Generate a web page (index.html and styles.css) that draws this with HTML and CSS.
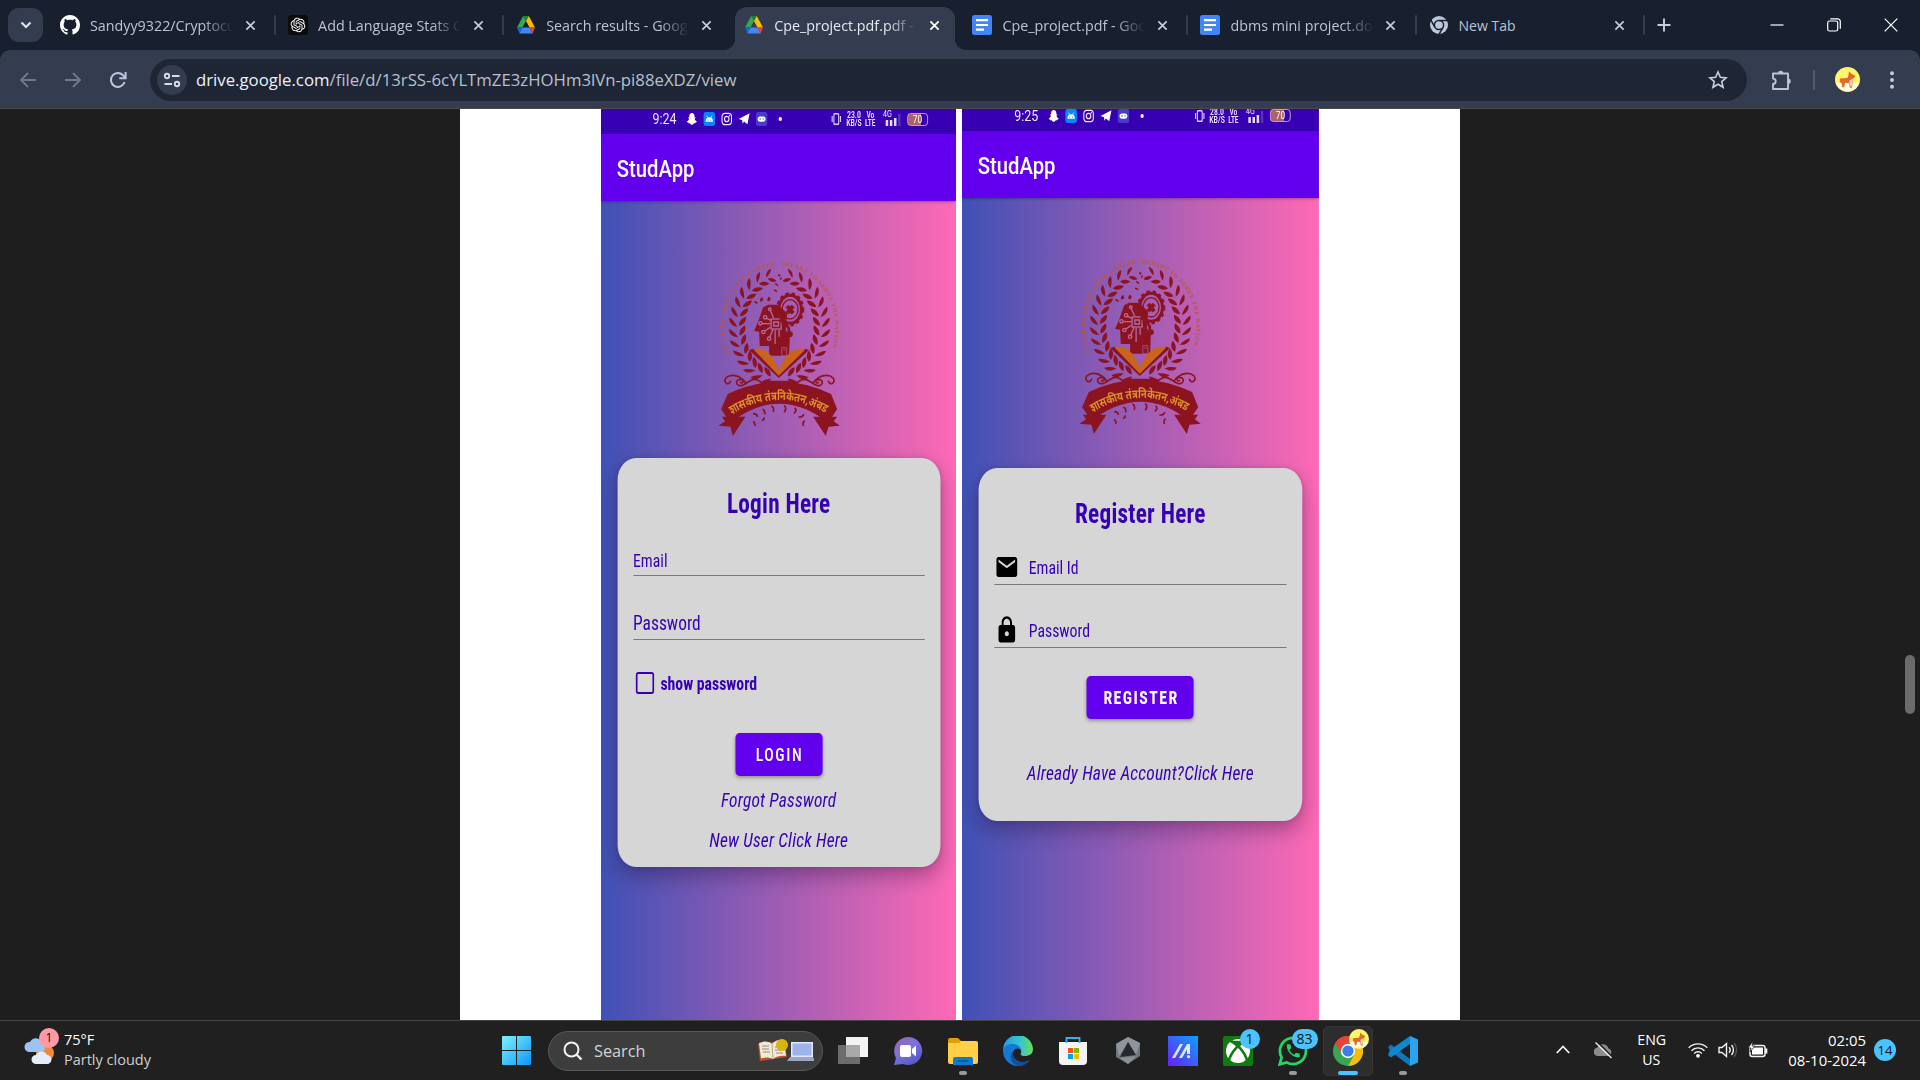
FILE: index.html
```
<!DOCTYPE html>
<html lang="en">
<head>
<meta charset="utf-8">
<title>Cpe_project.pdf.pdf - Google Drive</title>
<link rel="stylesheet" href="styles.css">
</head>
<body>
<svg class="defs" aria-hidden="true">
  <defs>
    <symbol id="i-close" viewBox="0 0 12 12"><path d="M1.5 1.5l9 9M10.500 1.500l-9 9" fill="none" stroke="currentColor" stroke-width="1.9"/></symbol>
    <symbol id="i-drive" viewBox="0 0 20 20">
      <path d="M7.200 1h5.600L10 6z" fill="#188038"/><path d="M7.200 1L10 6 6.400 12.500H1z" fill="#34a853"/>
      <path d="M12.800 1L10 6l3.600 6.500H19z" fill="#fbbc04"/>
      <path d="M1 12.500h5.400L3.500 18.500z" fill="#1967d2"/><path d="M6.400 12.500h7.200l2.900 6h-13z" fill="#4285f4"/><path d="M13.600 12.500H19l-2.500 6z" fill="#ea4335"/>
    </symbol>
    <symbol id="i-docs" viewBox="0 0 20 20"><rect width="20" height="20" rx="2.500" fill="#4285f4"/><path d="M4 5.200h12M4 10h12M4 14.600h8" stroke="#fff" stroke-width="2.200"/></symbol>
    <symbol id="i-corgi" viewBox="0 0 26 26"><circle cx="13" cy="13" r="13" fill="#fdf56c"/><path d="M.8 16.500h24.400A13 13 0 0 1 .8 16.500z" fill="#fffde0"/><path d="M5 12l8-.5 1-3 .5-4 2.500 2.500 3 1.500 1 1.500-2 2-.5 3.500-1 6h-2l-1-4.500-4-.5-1 4.500H7.500L7 17l-2-1.500z" fill="#e06a2b"/><path d="M15 14l3.500-2-.5 7-2 1.500-1-3.500z" fill="#f4cfae"/></symbol>
    <symbol id="i-snap" viewBox="0 0 16 16"><path d="M8 1c2.300 0 3.600 1.600 3.600 3.700v1.500l1.200-.3.300.8-1.300 1c.6 1.600 1.700 2.700 3.200 3.200-.2.900-1.300 1-2 1.200-.2.500-.1.900-.6.900-.8 0-1.400-.2-2.100.3C9.500 13.900 9 14.500 8 14.500s-1.500-.6-2.300-1.200c-.7-.5-1.300-.3-2.100-.3-.5 0-.4-.4-.6-.9-.7-.2-1.800-.3-2-1.200 1.500-.5 2.600-1.600 3.200-3.200l-1.300-1 .3-.8 1.200.3V4.700C4.400 2.600 5.700 1 8 1z" fill="#fff"/></symbol>
    <symbol id="i-android" viewBox="0 0 16 16"><rect width="16" height="16" rx="3.500" fill="#0a84ff"/><path d="M3 11a5 5 0 0 1 10 0z" fill="#fff"/><path d="M4.500 4.200l1.400 2.400M11.500 4.200l-1.400 2.400" stroke="#fff"/><circle cx="6" cy="9.300" r=".7" fill="#0a84ff"/><circle cx="10" cy="9.300" r=".7" fill="#0a84ff"/></symbol>
    <symbol id="i-insta" viewBox="0 0 16 16"><g fill="none" stroke="#f3e6ff" stroke-width="1.500"><rect x="1.500" y="1.500" width="13" height="13" rx="3.800"/><circle cx="8" cy="8" r="3.100"/></g><circle cx="11.700" cy="4.300" r=".9" fill="#fff"/></symbol>
    <symbol id="i-telegram" viewBox="0 0 16 16"><path d="M.5 8L15.500 1.500 12.500 14 7.800 10.800 5.800 13.500 5.300 9.300z" fill="#fff"/></symbol>
    <symbol id="i-game" viewBox="0 0 16 16"><rect width="16" height="16" rx="3.500" fill="#4a3ccb"/><rect x="2.500" y="5" width="11" height="6" rx="3" fill="#fff"/><path d="M5 8h2M9.500 8h1.500" stroke="#4a3ccb" stroke-width="1.300"/></symbol>
    <symbol id="i-vibrate" viewBox="0 0 16 16"><g fill="none" stroke="#ddd0f5" stroke-width="1.500"><rect x="4.700" y="2" width="6.600" height="12" rx="1"/><path d="M2.300 4.500v7M13.700 4.500v7"/></g></symbol>

    <symbol id="emblem" viewBox="0 0 480 585">
      <path id="ring" d="M89 312A166 187 0 1 1 391 312" fill="none"/>
      <text class="motto"><textPath href="#ring" textLength="692" lengthAdjust="spacing">ENTER TO SHAPE YOUR CAREER, DEPART TO SERVE THE NATION</textPath></text>
      <g fill="#8c1420">
        <g id="branch">
          <path transform="translate(208 82) rotate(72) scale(.8)" d="M-2 10C-9-2-15-11-27-17-29-4-19 8-2 10zM3 6C2-6 9-17 22-22 25-8 16 3 3 6z"/>
          <path transform="translate(181 95) rotate(57) scale(.9)" d="M-2 10C-9-2-15-11-27-17-29-4-19 8-2 10zM3 6C2-6 9-17 22-22 25-8 16 3 3 6z"/>
          <g transform="translate(158 115) rotate(43)"><path id="sprig" d="M-2 10C-9-2-15-11-27-17-29-4-19 8-2 10zM3 6C2-6 9-17 22-22 25-8 16 3 3 6z"/></g>
          <use href="#sprig" transform="translate(140 139) rotate(31)"/>
          <use href="#sprig" transform="translate(128 164) rotate(21)"/>
          <use href="#sprig" transform="translate(119 192) rotate(12)"/>
          <use href="#sprig" transform="translate(115 221) rotate(3)"/>
          <use href="#sprig" transform="translate(116 251) rotate(-6)"/>
          <use href="#sprig" transform="translate(121 280) rotate(-15)"/>
          <use href="#sprig" transform="translate(131 307) rotate(-24)"/>
          <use href="#sprig" transform="translate(144 332) rotate(-34)"/>
          <use href="#sprig" transform="translate(161 352) rotate(-45)"/>
          <use href="#sprig" transform="translate(181 369) rotate(-57)"/>
          <use href="#sprig" transform="translate(206 380) rotate(-69)"/>
        </g>
        <use href="#branch" transform="translate(478 0) scale(-1 1)"/>
        <!-- head in profile -->
        <path d="M190 172L205 164 235 164 262 190 258 240 270 262 268 317H208V288H180L178 245 163 243 176 212z"/>
        <path d="M228 98l8 8-2 3-9-7zM240 90l3-9 4 2-4 8zM224 118l9 5-2 4-9-5zM236 72l7 3-3 5-6-3zM165 152l10 6-4 4-8-5zM180 148l7-8 4 10-9 6zM205 140l8 4-3 10-8-2z"/>
      </g>
      <g fill="none" stroke="#b46aa0" stroke-width="4">
        <rect x="214" y="207" width="30" height="30"/><path d="M222 216h14v12h-14z"/>
        <circle cx="196" cy="202" r="5"/><circle cx="182" cy="220" r="5"/><circle cx="191" cy="246" r="5"/><circle cx="208" cy="266" r="5"/><circle cx="210" cy="178" r="4"/>
        <path d="M201 205l12 6M187 221h26M195 243l16-11M210 261l10-24M226 240v42M212 183l10 22M238 240v20"/>
      </g>
      <path d="M246 293h15v24h-15zM250 300h8" fill="#8c1420" stroke="#b46aa0" stroke-width="2"/>
      <path d="M245 222h14l8 14v20M268 250l8 5" fill="none" stroke="#8c1420" stroke-width="8"/><circle cx="270" cy="253" r="9" fill="#8c1420"/>
      <!-- gear -->
      <g fill="none" stroke="#8c1420">
        <ellipse cx="271" cy="178" rx="39" ry="48" stroke-width="7" stroke-dasharray="10 9"/>
        <ellipse cx="271" cy="178" rx="34" ry="42" stroke-width="9"/>
        <ellipse cx="271" cy="178" rx="24" ry="29" stroke-width="4"/>
        <path d="M262 168l18 22M280 168l-18 22" stroke-width="12"/>
      </g>
      <!-- open book -->
      <path d="M148 300L237 384 328 300 316 296 237 368 160 296z" fill="#8c1420"/>
      <path d="M162 299C185 288 208 304 223 330 232 346 235 352 237 362 240 352 243 346 252 330 268 304 292 290 316 299L237 377z" fill="#c8641e"/>
      <!-- scroll work -->
      <g id="curl" fill="none" stroke="#8c1420" stroke-width="5" stroke-linecap="round">
        <path d="M190 402C160 372 150 398 128 406 108 412 104 388 122 388 136 390 128 402 122 398M138 398C118 372 90 372 78 384 68 398 88 408 92 394"/>
      </g>
      <use href="#curl" transform="translate(478 0) scale(-1 1)"/>
      <!-- ribbon -->
      <g fill="#8c1420">
        <path d="M66 500L137 500 99 558 92 530 56 527 76 514zM412 500L340 500 378 558 386 530 420 527 402 514z"/>
        <path d="M196 392H282L278 410H200z"/>
        <path d="M84 432Q240 358 394 432L412 478 385 518Q240 404 92 518L64 478z"/>
        <g fill="none" stroke="#8c1420" stroke-width="5"><path d="M160 514q7 5 5 14M160 491q12 0 13 10M188 477q10 6 6 16M186 511q8-1 7-9M215 468q10 6 5 18M253 466q10 8 0 21M284 474q10 6-2 16M312 492q-2 10-16 9M315 512q-8 4-4 16"/></g>
      </g>
      <path id="band" d="M94 494Q240 406 386 494" fill="none"/>
      <text class="ribbon-text" lang="mr"><textPath href="#band" startOffset="2" textLength="296" lengthAdjust="spacingAndGlyphs">शासकीय तंत्रनिकेतन,अंबड</textPath></text>
    </symbol>
  </defs>
</svg>

<div class="window">
  <header class="tabstrip">
    <div class="tab-search"><svg width="14" height="14" viewBox="0 0 14 14"><path d="M2.500 4.500L7 9l4.500-4.500" fill="none" stroke="#dfe3ee" stroke-width="2.200"/></svg></div>
    <div class="tabs">
      <div class="tab divided">
        <svg class="fav" viewBox="0 0 16 16"><path fill="#fff" d="M8 0C3.580 0 0 3.580 0 8c0 3.540 2.290 6.530 5.470 7.590.4.070.55-.17.55-.38 0-.19-.01-.82-.01-1.490-2.010.37-2.530-.49-2.690-.94-.09-.23-.48-.94-.82-1.130-.28-.15-.68-.52-.01-.53.63-.01 1.080.58 1.230.82.72 1.210 1.870.87 2.330.66.07-.52.28-.87.51-1.070-1.780-.2-3.640-.89-3.640-3.950 0-.87.31-1.590.82-2.150-.08-.2-.36-1.020.08-2.120 0 0 .67-.21 2.200.82.64-.18 1.320-.27 2-.27s1.360.09 2 .27c1.530-1.040 2.200-.82 2.200-.82.44 1.100.16 1.920.08 2.120.51.56.82 1.270.82 2.150 0 3.070-1.870 3.750-3.650 3.950.29.25.54.73.54 1.480 0 1.070-.01 1.930-.01 2.200 0 .21.15.46.55.38A8.013 8.013 0 0016 8c0-4.420-3.580-8-8-8z"/></svg>
        <span class="tab-title">Sandyy9322/Cryptocu</span><svg class="close"><use href="#i-close"/></svg>
      </div>
      <div class="tab divided">
        <svg class="fav" viewBox="0 0 24 24"><rect width="24" height="24" rx="4" fill="#0b0b0c"/><g transform="translate(3.200 3.200) scale(.733)"><path fill="#fff" d="M22.2819 9.8211a5.9847 5.9847 0 0 0-.5157-4.9108 6.0462 6.0462 0 0 0-6.5098-2.9A6.0651 6.0651 0 0 0 4.9807 4.1818a5.9847 5.9847 0 0 0-3.9977 2.9 6.0462 6.0462 0 0 0 .7427 7.0966 5.98 5.98 0 0 0 .511 4.9107 6.051 6.051 0 0 0 6.5146 2.9001A5.9847 5.9847 0 0 0 13.2599 24a6.0557 6.0557 0 0 0 5.7718-4.2058 5.9894 5.9894 0 0 0 3.9977-2.9001 6.0557 6.0557 0 0 0-.7475-7.0729zm-9.022 12.6081a4.4755 4.4755 0 0 1-2.8764-1.0408l.1419-.0804 4.7783-2.7582a.7948.7948 0 0 0 .3927-.6813v-6.7369l2.02 1.1686a.071.071 0 0 1 .038.052v5.5826a4.504 4.504 0 0 1-4.4945 4.4944zm-9.6607-4.1254a4.4708 4.4708 0 0 1-.5346-3.0137l.142.0852 4.783 2.7582a.7712.7712 0 0 0 .7806 0l5.8428-3.3685v2.3324a.0804.0804 0 0 1-.0332.0615L9.74 19.9502a4.4992 4.4992 0 0 1-6.1408-1.6464zM2.3408 7.8956a4.485 4.485 0 0 1 2.3655-1.9728V11.6a.7664.7664 0 0 0 .3879.6765l5.8144 3.3543-2.0201 1.1685a.0757.0757 0 0 1-.071 0l-4.8303-2.7865A4.504 4.504 0 0 1 2.3408 7.872zm16.5963 3.8558L13.1038 8.364 15.1192 7.2a.0757.0757 0 0 1 .071 0l4.8303 2.7913a4.4944 4.4944 0 0 1-.6765 8.1042v-5.6772a.79.79 0 0 0-.407-.667zm2.0107-3.0231l-.142-.0852-4.7735-2.7818a.7759.7759 0 0 0-.7854 0L9.409 9.2297V6.8974a.0662.0662 0 0 1 .0284-.0615l4.8303-2.7866a4.4992 4.4992 0 0 1 6.6802 4.66zM8.3065 12.863l-2.02-1.1638a.0804.0804 0 0 1-.038-.0567V6.0742a4.4992 4.4992 0 0 1 7.3757-3.4537l-.142.0805L8.704 5.459a.7948.7948 0 0 0-.3927.6813zm1.0976-2.3654l2.602-1.4998 2.6069 1.4998v2.9994l-2.5974 1.4997-2.6067-1.4997Z"/></g></svg>
        <span class="tab-title">Add Language Stats G</span><svg class="close"><use href="#i-close"/></svg>
      </div>
      <div class="tab"><svg class="fav"><use href="#i-drive"/></svg><span class="tab-title">Search results - Goog</span><svg class="close"><use href="#i-close"/></svg></div>
      <div class="tab active"><svg class="fav"><use href="#i-drive"/></svg><span class="tab-title">Cpe_project.pdf.pdf -</span><svg class="close"><use href="#i-close"/></svg></div>
      <div class="tab divided"><svg class="fav"><use href="#i-docs"/></svg><span class="tab-title">Cpe_project.pdf - Goo</span><svg class="close"><use href="#i-close"/></svg></div>
      <div class="tab divided"><svg class="fav"><use href="#i-docs"/></svg><span class="tab-title">dbms mini project.do</span><svg class="close"><use href="#i-close"/></svg></div>
      <div class="tab divided">
        <svg class="fav" viewBox="0 0 20 20"><circle cx="10" cy="10" r="9" fill="#bcc6dc"/><g fill="none" stroke="#182030" stroke-width="1.500"><circle cx="10" cy="10" r="4.600"/><path d="M10 5.400h9M6 12.300L1.600 4.700M14 12.300L9.600 20"/></g><circle cx="10" cy="10" r="3.300" fill="#bcc6dc"/></svg>
        <span class="tab-title short">New Tab</span><svg class="close"><use href="#i-close"/></svg>
      </div>
    </div>
    <svg class="new-tab" width="14" height="14" viewBox="0 0 14 14"><path d="M7 .5v13M.5 7h13" stroke="#c6cede" stroke-width="1.900"/></svg>
    <div class="win-controls">
      <svg viewBox="0 0 14 14"><path d="M.5 7h13" stroke="#fff" stroke-width="1.200"/></svg>
      <svg viewBox="0 0 14 14"><g fill="none" stroke="#fff" stroke-width="1.200"><rect x=".7" y="3" width="10" height="10" rx="1.800"/><path d="M3.300.8h7.400a2.600 2.600 0 0 1 2.600 2.600v7.300"/></g></svg>
      <svg viewBox="0 0 14 14"><path d="M.7.7l12.600 12.600M13.300.7L.7 13.300" stroke="#fff" stroke-width="1.200"/></svg>
    </div>
  </header>

  <div class="toolbar">
    <div class="nav">
      <svg class="dim" viewBox="0 0 20 20"><path d="M18 10H3M10 3l-7 7 7 7" fill="none" stroke="currentColor" stroke-width="1.800"/></svg>
      <svg class="dim" viewBox="0 0 20 20"><path d="M2 10h15M10 3l7 7-7 7" fill="none" stroke="currentColor" stroke-width="1.800"/></svg>
      <svg viewBox="0 0 20 20"><path d="M16.600 12A7 7 0 1 1 15.500 5.700L17 7.500" fill="none" stroke="currentColor" stroke-width="2"/><path d="M17.600 2v6.300h-6.300" fill="none" stroke="currentColor" stroke-width="2"/></svg>
    </div>
    <div class="omnibox">
      <span class="site-info"><svg width="18" height="18" viewBox="0 0 18 18"><g fill="none" stroke="#d5dbe8" stroke-width="1.900"><circle cx="4" cy="5" r="2.200"/><path d="M9 5h7.500M1.500 13H9"/><circle cx="14" cy="13" r="2.200"/></g></svg></span>
      <span class="url"><b>drive.google.com</b>/file/d/13rSS-6cYLTmZE3zHOHm3lVn-pi88eXDZ/view</span>
      <svg class="star" width="20" height="20" viewBox="0 0 20 20"><path d="M10 2l2.350 5.300 5.750.55-4.350 3.800 1.300 5.650L10 14.300 4.950 17.300l1.300-5.650L1.900 7.850l5.750-.55z" fill="none" stroke="#c8d0e2" stroke-width="1.600"/></svg>
    </div>
    <svg class="ext" width="22" height="22" viewBox="0 0 22 22"><path d="M3 4.500h15V20H3v-5a2.700 2.700 0 0 0 0-5.400z" fill="none" stroke="#b9c4de" stroke-width="1.900" stroke-linejoin="round"/><path d="M8 4.500a2.700 2.700 0 0 1 5.400 0zM18 9.500a2.700 2.700 0 0 1 0 5.400z" fill="#b9c4de"/></svg>
    <i class="tool-sep"></i>
    <svg class="avatar" width="25" height="25"><use href="#i-corgi"/></svg>
    <svg class="menu" width="6" height="20" viewBox="0 0 6 20"><g fill="#c0cbe2"><circle cx="3" cy="3.200" r="2"/><circle cx="3" cy="10" r="2"/><circle cx="3" cy="16.800" r="2"/></g></svg>
  </div>

  <main class="viewer">
    <div class="sheet">
      <section class="phone">
        <div class="screen login">
          <div class="status">
            <span class="clock">9:24</span>
            <svg><use href="#i-snap"/></svg><svg><use href="#i-android"/></svg><svg><use href="#i-insta"/></svg><svg><use href="#i-telegram"/></svg><svg><use href="#i-game"/></svg><i class="dot"></i>
            <div class="signals">
              <svg><use href="#i-vibrate"/></svg><span class="stack rate">23.0<br>KB/S</span><span class="stack">Vo<br>LTE</span>
              <span class="cell"><span class="net">4G</span><i></i><i></i><i></i><i></i></span><span class="battery">70</span>
            </div>
          </div>
          <div class="appbar">StudApp</div>
          <div class="hero"><svg class="crest" preserveAspectRatio="none" viewBox="0 0 480 585"><use href="#emblem" width="480" height="585"/></svg></div>
          <div class="card">
            <h2>Login Here</h2>
            <div class="field">Email</div>
            <div class="field large">Password</div>
            <div class="check"><i class="box"></i>show password</div>
            <div class="button">LOGIN</div>
            <div class="link">Forgot Password</div>
            <div class="link second">New User Click Here</div>
          </div>
        </div>
      </section>
      <section class="phone">
        <div class="screen register">
          <div class="status">
            <span class="clock">9:25</span>
            <svg><use href="#i-snap"/></svg><svg><use href="#i-android"/></svg><svg><use href="#i-insta"/></svg><svg><use href="#i-telegram"/></svg><svg><use href="#i-game"/></svg><i class="dot"></i>
            <div class="signals">
              <svg><use href="#i-vibrate"/></svg><span class="stack rate">28.0<br>KB/S</span><span class="stack">Vo<br>LTE</span>
              <span class="cell"><span class="net">4G</span><i></i><i></i><i></i><i></i></span><span class="battery">70</span>
            </div>
          </div>
          <div class="appbar">StudApp</div>
          <div class="hero"><svg class="crest" preserveAspectRatio="none" viewBox="0 0 480 585"><use href="#emblem" width="480" height="585"/></svg></div>
          <div class="card">
            <h2>Register Here</h2>
            <div class="field"><svg viewBox="0 0 24 24"><path d="M20 4H4c-1.100 0-2 .9-2 2v12c0 1.100.9 2 2 2h16c1.100 0 2-.9 2-2V6c0-1.100-.9-2-2-2zm0 4l-8 5-8-5V6l8 5 8-5v2z"/></svg>Email Id</div>
            <div class="field"><svg viewBox="0 0 24 24"><path d="M18 8h-1V6c0-2.760-2.240-5-5-5S7 3.240 7 6v2H6c-1.100 0-2 .9-2 2v10c0 1.100.9 2 2 2h12c1.100 0 2-.9 2-2V10c0-1.100-.9-2-2-2zm-6 9c-1.100 0-2-.9-2-2s.9-2 2-2 2 .9 2 2-.9 2-2 2zm3.100-9H8.900V6c0-1.710 1.390-3.100 3.100-3.100s3.100 1.390 3.100 3.100v2z"/></svg>Password</div>
            <div class="button">REGISTER</div>
            <div class="link">Already Have Account?Click Here</div>
          </div>
        </div>
      </section>
    </div>
    <div class="scroll-thumb"></div>
  </main>

  <footer class="taskbar">
    <div class="weather">
      <div class="weather-icon">
        <svg width="32" height="30" viewBox="0 0 32 30"><circle cx="21" cy="18" r="9" fill="#f0883a"/><path d="M5 17a5 5 0 0 1 1-10 7 7 0 0 1 13 2 4.500 4.500 0 0 1-1 8z" fill="#9cc4f2"/><path d="M12 29a4.500 4.500 0 0 1 0-9 6 6 0 0 1 11 0 4.500 4.500 0 0 1 0 9z" fill="#e3edfb"/></svg>
        <span class="alert">1</span>
      </div>
      <div class="weather-text"><span>75°F</span><span class="sub">Partly cloudy</span></div>
    </div>
    <div class="app">
      <svg width="29" height="29" viewBox="0 0 29 29"><defs><linearGradient id="win" gradientUnits="userSpaceOnUse" x2="29" y2="29"><stop stop-color="#7df0ff"/><stop offset="1" stop-color="#0a98f8"/></linearGradient></defs><path d="M0 1a1 1 0 0 1 1-1h13v14H0zM15 0h13a1 1 0 0 1 1 1v13H15zM0 15h14v14H1a1 1 0 0 1-1-1zM15 15h14v13a1 1 0 0 1-1 1H15z" fill="url(#win)"/></svg>
    </div>
    <div class="search">
      <svg width="20" height="20" viewBox="0 0 20 20"><circle cx="8.500" cy="8.500" r="7" fill="none" stroke="#f2f2f2" stroke-width="2"/><path d="M13.500 13.500l5 5" stroke="#f2f2f2" stroke-width="2.400"/></svg>
      <span>Search</span>
      <svg class="doodle" width="56" height="24" viewBox="0 0 56 24"><path d="M0 5l14-2 12-1 3 16-13 2-14 2z" fill="#b5532b"/><path d="M1 4c5-2 9-2 13 1 3-4 8-5 12-4l2 16c-5-.5-9 0-13 3-4-2-8-2-12-.5z" fill="#f0e9d6"/><path d="M14 5l1 15" stroke="#b9a988"/><path d="M4 7h7M4 10h7M5 13h7M17 8h7M17 11h7M18 14h7" stroke="#8d8473" stroke-width=".9"/><circle cx="24" cy="6" r="6" fill="#d9b40c"/><path d="M33 3h22v15H33z" fill="#dfe8ff"/><path d="M34.500 4.500h19v12h-19z" fill="#9db4ea"/><path d="M32 18h23l2 4H29z" fill="#9ba6c4"/></svg>
    </div>
    <div class="app"><svg width="30" height="28" viewBox="0 0 30 28"><path d="M0 8h22v19H0z" fill="#6c6c6c"/><path d="M8 0h22v20H8z" fill="#f4f4f4"/><path d="M8 8h14v12H8z" fill="#a9a9a9"/></svg></div>
    <div class="app"><svg width="30" height="30" viewBox="0 0 30 30"><defs><linearGradient id="chat" x2=".7" y2="1"><stop stop-color="#9a62b0"/><stop offset=".5" stop-color="#7b74dc"/><stop offset="1" stop-color="#5458c8"/></linearGradient></defs><path d="M15 1a14 14 0 1 1-5 27L1 29l2-7A14 14 0 0 1 15 1z" fill="url(#chat)"/><rect x="7" y="9" width="11" height="12" rx="2" fill="#fff"/><path d="M19 13l4-3.500v11L19 17z" fill="#fff"/></svg></div>
    <div class="app running"><svg width="30" height="28" viewBox="0 0 30 28"><path d="M0 3a2 2 0 0 1 2-2h8l3 3v4H0z" fill="#e09e08"/><path d="M0 6h11l2-2h15a2 2 0 0 1 2 2v19a2 2 0 0 1-2 2H2a2 2 0 0 1-2-2z" fill="#ffcf45"/><path d="M5 28v-6a2 2 0 0 1 2-2h16a2 2 0 0 1 2 2v6z" fill="#0f7bd0"/><path d="M10 24h10" stroke="#0a4f93" stroke-width="1.500"/></svg></div>
    <div class="app"><svg width="30" height="30" viewBox="0 0 30 30"><defs><linearGradient id="edge" x2="1"><stop stop-color="#1f9de0"/><stop offset=".6" stop-color="#37c6d0"/><stop offset="1" stop-color="#6ae04f"/></linearGradient></defs><path d="M0 15A15 15 0 0 1 30 13c0 5-4 7-8 7s-5-1-4-3-1-6-6-6S0 14 0 15z" fill="url(#edge)"/><path d="M0 14.500c.5-4 5-6.500 9.500-6.500 5 0 9 3.500 9 7-1-3-6-3.500-8 0-2.500 5 2 11 9 11 3 0 5-.6 7.500-2A15 15 0 0 1 0 14.500z" fill="#1478d4"/><path d="M10.500 15c-2.500 5 2 11 9 11 3 0 5-.6 7.500-2-3.500 5-9 6.500-13.500 5.500C7 27 6 19 10.500 15z" fill="#124f9c"/></svg></div>
    <div class="app"><svg width="30" height="30" viewBox="0 0 30 30"><path d="M1 6h28v19a4 4 0 0 1-4 4H5a4 4 0 0 1-4-4z" fill="#f4f4f4"/><path d="M8.500 7V2h13v5" fill="none" stroke="#2fb4f0" stroke-width="1.800"/><path d="M10 12h5v5h-5z" fill="#f25022"/><path d="M16 12h5v5h-5z" fill="#7fba00"/><path d="M10 18h5v5h-5z" fill="#00a4ef"/><path d="M16 18h5v5h-5z" fill="#ffb900"/></svg></div>
    <div class="app"><svg width="28" height="29" viewBox="0 0 28 29"><path d="M14 1L26 7v13L14 28 2 21V8z" fill="#70757c"/><path d="M14 1L26 7l-4 12L14 6 5 20 2 8z" fill="#8f959c"/><path d="M14 6l8 13-16 2z" fill="#25282c"/><path d="M6 22l16-2-8 8z" fill="#8b9198"/></svg></div>
    <div class="app"><svg width="30" height="30" viewBox="0 0 30 30"><defs><linearGradient id="asus" x1="0" y1="1" x2="1" y2="0"><stop stop-color="#6a1ef5"/><stop offset="1" stop-color="#0aa2ff"/></linearGradient></defs><path d="M0 0h30v30H0z" fill="url(#asus)"/><g fill="#dfe6ff"><path d="M4 22L12 8h3L7 22zM11 22L19 8h3v10h-3v-4.500L14 22z"/><circle cx="20.500" cy="20.700" r="1.600"/></g></svg></div>
    <div class="app"><svg width="30" height="30" viewBox="0 0 30 30"><rect width="30" height="30" rx="2" fill="#107c10"/><circle cx="15" cy="15" r="12" fill="#fff"/><g fill="none" stroke="#107c10" stroke-width="2.600"><path d="M5 3.500C13 7 22 15 24.500 26M25 3.500C17 7 8 15 5.500 26"/></g><path d="M8 4.500Q15 5 22 4.500L15 9z" fill="#107c10"/></svg><span class="count one">1</span></div>
    <div class="app running"><svg width="30" height="30" viewBox="0 0 30 30"><path d="M1.700 28.300l1.900-6.900A13 13 0 1 1 8.600 26.400z" fill="none" stroke="#25d366" stroke-width="2.800"/><path transform="translate(6.500 6) scale(.73)" d="M6.600 10.800c1.400 2.800 3.800 5.100 6.600 6.600l2.200-2.200c.3-.3.7-.4 1-.2 1.100.4 2.300.6 3.600.6.6 0 1 .4 1 1V20c0 .6-.4 1-1 1C10.600 21 3 13.400 3 4c0-.6.4-1 1-1h3.500c.6 0 1 .4 1 1 0 1.300.2 2.500.6 3.600.1.3 0 .7-.2 1z" fill="#25d366"/></svg><span class="count">83</span></div>
    <div class="app current"><svg width="30" height="30" viewBox="0 0 30 30"><circle cx="15" cy="15" r="15" fill="#34a853"/><path d="M2 7.500A15 15 0 0 1 28 7.500H15L9 18z" fill="#ea4335"/><path d="M28 7.500A15 15 0 0 1 15 30L21.500 18.500 20 7.500z" fill="#fbbc04"/><circle cx="15" cy="15" r="7.200" fill="#fff"/><circle cx="15" cy="15" r="5.600" fill="#3b7ded"/></svg><svg class="profile"><use href="#i-corgi"/></svg></div>
    <div class="app running"><svg width="30" height="30" viewBox="0 0 30 30"><path d="M0 11l3-2.500L22 23v7L2 15z" fill="#1177b8"/><path d="M0 19l3 2.500L22 8V0L2 14z" fill="#0f86cf"/><path d="M22 0l8 3.500v23L22 30z" fill="#2aa4ee"/></svg></div>
    <div class="tray">
      <svg class="chev" width="14" height="14" viewBox="0 0 14 14"><path d="M.8 10L7 3.500 13.200 10" fill="none" stroke="#f2f2f2" stroke-width="1.800"/></svg>
      <svg class="cloud" width="20" height="18" viewBox="0 0 20 18"><path d="M4.500 15a4.300 4.300 0 0 1 0-8.500 6 6 0 0 1 11 1A3.900 3.900 0 0 1 15.500 15z" fill="#8c8c8c"/><path d="M4 .5l15 15" stroke="#202020" stroke-width="1.600"/><path d="M2.500 1.500l16 15.500" stroke="#f0f0f0" stroke-width="1.300"/></svg>
      <div class="lang">ENG<br>US</div>
      <svg class="wifi" width="20" height="16" viewBox="0 0 20 16"><g fill="none" stroke="#f2f2f2" stroke-width="1.400"><path d="M.7 5.800a13 13 0 0 1 18.600 0M3.500 8.700a9 9 0 0 1 13 0M6.200 11.400a5.300 5.300 0 0 1 7.600 0"/></g><circle cx="10" cy="13.800" r="1.900" fill="#fff"/></svg>
      <svg width="20" height="18" viewBox="0 0 20 18"><g fill="none" stroke="#f2f2f2" stroke-width="1.400"><path d="M1 6.500h3L8.500 2.500v13L4 11.500H1z"/><path d="M11 6.300a4 4 0 0 1 0 5.400M13.500 4a7.500 7.500 0 0 1 0 10"/><path d="M16 2a11 11 0 0 1 0 14" stroke="#555"/></g></svg>
      <svg width="20" height="18" viewBox="0 0 20 18"><rect x="2" y="4.500" width="15" height="11" rx="2.200" fill="none" stroke="#f2f2f2" stroke-width="1.500"/><path d="M4 6.500h11v7H4z" fill="#fff"/><path d="M18.300 7.500v5" stroke="#fff" stroke-width="2"/><path d="M5 0L0 7h3l-1 4 5-6H4z" fill="#fff" stroke="#202020" stroke-width=".8"/></svg>
      <div class="datetime">02:05<br>08-10-2024</div>
      <span class="notif">14</span>
    </div>
  </footer>
</div>
</body>
</html>
```
FILE: styles.css
```
* { box-sizing: border-box; }
body { margin: 0; background: #1f1f1f; font-family: "Open Sans", "Noto Sans", sans-serif; color: #fff; overflow: hidden; }
svg { display: block; flex: none; }
.defs { position: absolute; width: 0; height: 0; }
.window { width: 1920px; height: 1080px; display: flex; flex-direction: column; }

/* tab strip */
.tabstrip { height: 50px; flex: none; background: #182030; box-shadow: 0 10px 0 #182030; display: flex; align-items: center; }
.tab-search { width: 35px; height: 34px; margin-left: 8px; border-radius: 11px; background: #343d4f; display: flex; align-items: center; justify-content: center; }
.tabs { display: flex; margin-left: 6px; align-self: stretch; }
.tab { width: 228.100px; height: 50px; padding-left: 11px; display: flex; align-items: center; position: relative; color: #bcc3d3; }
.fav { width: 20px; height: 20px; }
.tab-title { margin: 1px 0 0 10px; width: 145px; font-size: 14.300px; line-height: 20px; white-space: nowrap; overflow: hidden; -webkit-mask-image: linear-gradient(90deg, #000 113px, transparent 143px); mask-image: linear-gradient(90deg, #000 113px, transparent 143px); }
.tab-title.short { -webkit-mask-image: none; mask-image: none; font-size: 14px; }
.close { width: 11px; height: 11px; margin-left: 10px; color: #c3cad9; }
.divided::after { content: ""; position: absolute; right: 1px; top: 15px; width: 2px; height: 20px; background: #343d4f; border-radius: 1px; }
.tab.active { color: #e4e8f0; z-index: 0; }
.tab.active .close { color: #fff; }
.tab.active::before { content: ""; position: absolute; z-index: -1; left: 2px; right: 6px; top: 7px; bottom: 0; background: #343d4f; border-radius: 12px 12px 0 0; }
.tab.active::after { content: ""; position: absolute; z-index: -2; left: -10px; right: -6px; bottom: 0; height: 12px; background: radial-gradient(circle at 0 0, #182030 12px, #343d4f 12.500px) left / 12px 12px no-repeat, radial-gradient(circle at 12px 0, #182030 12px, #343d4f 12.500px) right / 12px 12px no-repeat; }
.new-tab { margin-left: 11px; }
.win-controls { margin-left: auto; margin-right: 22px; display: flex; gap: 43px; }
.win-controls svg { width: 14px; height: 14px; }

/* toolbar */
.toolbar { height: 59px; flex: none; background: linear-gradient(#343d4f, #343d4f) 0 0 / 100% 58px no-repeat, #4a4a4d; display: flex; align-items: center; position: relative; border-radius: 10px 10px 0 0; }
.nav { width: 150px; padding-left: 18px; display: flex; gap: 25px; color: #bcc8e3; }
.nav svg { width: 20px; height: 20px; }
.nav .dim { color: #71798b; }
.omnibox { width: 1597px; height: 42px; border-radius: 21px; background: #1e2636; display: flex; align-items: center; padding: 0 19px 0 7px; }
.site-info { width: 30px; height: 30px; border-radius: 50%; background: #343d4f; display: flex; align-items: center; justify-content: center; }
.url { margin: 0 0 1px 9px; font-size: 16.750px; color: #b9c0cf; white-space: nowrap; }
.url b { font-weight: 400; color: #eef1f7; }
.star { margin-left: auto; }
.ext { margin-left: 23px; }
.tool-sep { width: 2px; height: 20px; background: #4f5a70; margin-left: 21px; }
.avatar { margin-left: 20px; }
.menu { margin-left: 29px; }

/* document viewer */
.viewer { flex: 1; background: #1e1e1e; position: relative; display: flex; justify-content: center; overflow: hidden; }
.sheet { width: 1000px; background: #fff; display: flex; gap: 6px; padding-left: 141px; }
.scroll-thumb { position: absolute; right: 5px; top: 546px; width: 10px; height: 59px; border-radius: 5px; background: #6b6b6b; }

/* each phone screen is laid out at full width and squeezed into its slot */
.phone { width: 355px; overflow: hidden; }
.phone + .phone { width: 357px; }
.screen { width: 427.700px; height: 911px; transform: scaleX(.83); transform-origin: 0 0; background: linear-gradient(90deg, #3f51b5, #ff69b4); font-family: Roboto, "Noto Sans", sans-serif; font-stretch: 75%; color: #3700b3; }
.screen.register { width: 430.200px; }
.status { height: 24.500px; padding: 0 34px 4.500px 62px; background: #3700b3; color: #eee4ff; display: flex; align-items: center; gap: 6px; overflow: hidden; font-stretch: 100%; }
.register .status { height: 22px; padding-bottom: 8.600px; padding-left: 63px; }
.status svg { width: 15px; height: 14px; }
.clock { font-size: 15px; line-height: 18px; margin-right: 5px; }
.dot { width: 4px; height: 4px; border-radius: 50%; background: #fff; margin-left: 7px; }
.signals { margin-left: auto; display: flex; align-items: center; gap: 4px; }
.stack { font-size: 9px; line-height: 8px; text-align: center; font-weight: 500; font-stretch: 75%; }
.stack.rate { font-size: 9.500px; line-height: 8px; }
.cell { display: flex; align-items: flex-end; gap: 2px; height: 14px; position: relative; padding-left: 8px; }
.cell i { width: 3px; height: 6px; background: #e6dafb; }
.cell i:nth-of-type(3) { height: 8px; }
.cell i:nth-of-type(4) { height: 12px; background: #5631bd; }
.net { position: absolute; left: 5px; top: -2px; font-size: 8.500px; line-height: 9px; }
.battery { width: 25px; height: 13px; border: 1.200px solid #c9a9ce; border-radius: 4px; background: linear-gradient(90deg, #ad6468 70%, transparent 70%); font-size: 10px; line-height: 11px; text-align: center; color: #fff; margin-left: 4px; }
.appbar { height: 67px; background: #6200ee; color: #fff; padding: 1px 0 0 19px; line-height: 67px; font-size: 24.400px; font-weight: 500; font-stretch: 95%; box-shadow: 0 1px 3px rgba(0, 0, 0, .3); }
.hero { height: 257.500px; padding-top: 49.500px; display: flex; justify-content: center; }
.login .hero { padding-left: 3px; }
.register .hero { height: 270.300px; }
.crest { width: 192.800px; height: 195px; }
.card { height: 408.700px; margin: 0 19.200px 0 19.600px; padding: 25px 19px 0; border-radius: 22px; background: #d6d6d6; display: flex; flex-direction: column; box-shadow: 0 10px 22px rgba(20, 0, 40, .3), 0 0 6px rgba(20, 0, 40, .12); }
.register .card { height: 353px; margin: 0 20.500px; margin-left: 20px; }
.card h2 { margin: 0; font-size: 28px; font-weight: 700; letter-spacing: .3px; line-height: 41px; height: 40px; text-align: center; }
.field { height: 30px; margin-top: 23px; border-bottom: 1px solid #7a7a7a; line-height: 29px; font-size: 19px; }
.field.large { margin-top: 34px; font-size: 21px; line-height: 26px; }
.register .field { height: 33px; margin-top: 19px; padding-bottom: 1px; line-height: 30px; display: flex; align-items: center; gap: 11.400px; }
.register .field + .field { margin-top: 30px; }
.field svg { width: 30px; height: 30px; fill: #000; margin-bottom: 1px; }
.check { margin-top: 32px; height: 22px; line-height: 23px; padding-left: 3.500px; display: flex; align-items: center; gap: 7.500px; font-size: 19px; font-weight: 700; }
.box { width: 22px; height: 22px; border: 2px solid #3700b3; border-radius: 3px; }
.button { width: 105px; height: 43px; margin-top: 39px; align-self: center; background: #6200ee; color: #fff; border-radius: 5px; font-size: 19px; font-weight: 500; letter-spacing: 1.900px; text-indent: 1.900px; line-height: 44px; text-align: center; box-shadow: 0 2px 4px rgba(0, 0, 0, .3); }
.register .button { width: 129px; margin-top: 27.500px; font-weight: 700; letter-spacing: 1.800px; }
.link { margin-top: 12px; font-size: 21px; font-style: italic; letter-spacing: .2px; line-height: 24px; text-align: center; white-space: nowrap; }
.link.second { margin-top: 16px; }
.register .link { margin-top: 42.500px; }
.motto { font: 700 18px "Liberation Serif", serif; fill: #b9573f; }
.ribbon-text { font: 700 37px "Noto Sans", sans-serif; fill: #dc8f2c; }

/* taskbar */
.taskbar { height: 60px; flex: none; background: #202020; border-top: 1px solid #444; display: flex; align-items: center; font-size: 14.500px; }
.weather { width: 489px; padding: 0 0 2px 24px; display: flex; align-items: center; gap: 8px; }
.weather-icon { position: relative; }
.alert { position: absolute; left: 15px; top: -7px; width: 20px; height: 20px; border-radius: 50%; background: #ff99a4; color: #111; font-size: 12px; line-height: 20px; text-align: center; }
.weather-text { display: flex; flex-direction: column; line-height: 20px; }
.weather-text .sub { color: #cfcfcf; }
.app { width: 55px; height: 50px; display: flex; align-items: center; justify-content: center; position: relative; }
.search { width: 275px; height: 40px; margin: 0 2.500px 0 4px; border-radius: 20px; background: #3d3d3d; border: 1px solid #585858; display: flex; align-items: center; padding: 0 8px 0 14px; gap: 11px; font-size: 16.300px; color: #d4d4d4; }
.doodle { margin-left: auto; }
.running::after { content: ""; position: absolute; bottom: 1px; width: 8px; height: 4px; border-radius: 2px; background: #9a9a9a; }
.current::before { content: ""; position: absolute; z-index: 0; inset: 0 2.500px; border-radius: 5px; background: #2d2d2d; border: 1px solid #353535; }
.current::after { content: ""; position: absolute; bottom: 1px; width: 20px; height: 4px; border-radius: 2px; background: #4cc2ff; }
.current svg { position: relative; }
.current .profile { position: absolute; left: 28px; top: 3px; width: 20px; height: 20px; }
.count { position: absolute; left: 26px; top: 3px; width: 26px; height: 20px; border-radius: 10px; background: #4cc2ff; color: #10151a; font-size: 14px; line-height: 20px; text-align: center; }
.count.one { left: 29px; width: 20px; }
.tray { margin-left: auto; padding: 0 24px 1px 0; display: flex; align-items: center; gap: 10px; line-height: 20px; }
.chev { margin-right: 13px; }
.cloud { margin-right: 14px; }
.lang { width: 28px; text-align: center; font-size: 14.200px; }
.wifi { margin-left: 13px; }
.datetime { margin-left: 10px; text-align: right; font-size: 14.900px; }
.notif { margin-left: -2px; width: 22px; height: 22px; border-radius: 50%; background: #4cc2ff; color: #10151a; font-size: 13px; line-height: 22px; text-align: center; }
```
